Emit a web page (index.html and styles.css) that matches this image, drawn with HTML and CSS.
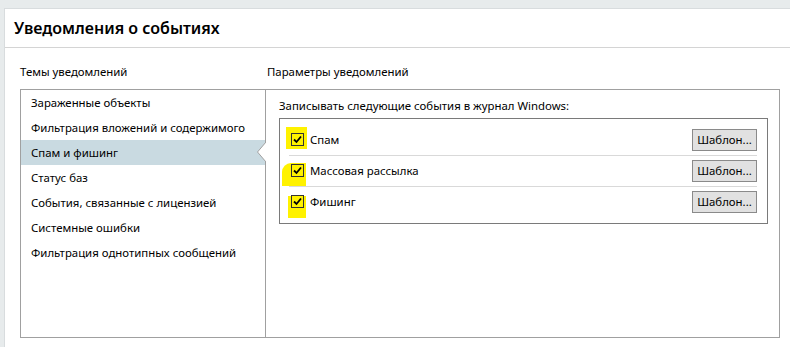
FILE: index.html
```html
<!DOCTYPE html>
<html lang="ru">
<head>
  <meta charset="UTF-8">
  <title>Уведомления о событиях</title>
  <link rel="stylesheet" href="styles.css">
</head>
<body>
  <div class="panel">
    <div class="panel-head">Уведомления о событиях</div>
    <div class="panel-body">
      <div class="captions">
        <div class="cap-left">Темы уведомлений</div>
        <div class="cap-right">Параметры уведомлений</div>
      </div>
      <div class="frame">
        <ul class="topics">
          <li>Зараженные объекты</li>
          <li>Фильтрация вложений и содержимого</li>
          <li class="selected">Спам и фишинг
            <svg class="notch" width="10" height="20" viewBox="0 0 10 20">
              <polygon points="10,0 1.5,10 10,20" fill="#fff"/>
              <polyline points="10,0 1.5,10 10,20" fill="none" stroke="#a0a0a0" stroke-width="1"/>
            </svg>
          </li>
          <li>Статус баз</li>
          <li>События, связанные с лицензией</li>
          <li>Системные ошибки</li>
          <li>Фильтрация однотипных сообщений</li>
        </ul>
        <div class="settings">
          <div class="settings-caption">Записывать следующие события в журнал Windows:</div>
          <div class="events">
            <div class="event">
              <span class="mark mark-1"></span>
              <span class="check">
                <svg width="13" height="13" viewBox="0 0 13 13"><rect x="0.5" y="0.5" width="12" height="12" fill="none" stroke="#333"/><polyline points="3,6.5 5.5,9 10,3.5" fill="none" stroke="#000" stroke-width="1.8"/></svg>
              </span>
              <span class="event-name">Спам</span>
              <button class="btn" type="button">Шаблон...</button>
            </div>
            <div class="event">
              <span class="mark mark-2"></span>
              <span class="check">
                <svg width="13" height="13" viewBox="0 0 13 13"><rect x="0.5" y="0.5" width="12" height="12" fill="none" stroke="#333"/><polyline points="3,6.5 5.5,9 10,3.5" fill="none" stroke="#000" stroke-width="1.8"/></svg>
              </span>
              <span class="event-name">Массовая рассылка</span>
              <button class="btn" type="button">Шаблон...</button>
            </div>
            <div class="event">
              <span class="mark mark-3"></span>
              <span class="check">
                <svg width="13" height="13" viewBox="0 0 13 13"><rect x="0.5" y="0.5" width="12" height="12" fill="none" stroke="#333"/><polyline points="3,6.5 5.5,9 10,3.5" fill="none" stroke="#000" stroke-width="1.8"/></svg>
              </span>
              <span class="event-name">Фишинг</span>
              <button class="btn" type="button">Шаблон...</button>
            </div>
          </div>
        </div>
      </div>
    </div>
  </div>
</body>
</html>
```

FILE: styles.css
```css
* { box-sizing: border-box; margin: 0; padding: 0; }

body {
  background: #e7ebec;
  font-family: "Noto Sans", "Open Sans", sans-serif;
  font-size: 11.4px;
  color: #000;
  width: 790px;
  height: 347px;
  overflow: hidden;
}

/* Main panel */
.panel {
  margin: 8px 0 0 4px;
  background: #fff;
  border-top: 1px solid #d8dcde;
  border-left: 1px solid #d8dcde;
  height: 339px;
}
.panel-head {
  height: 39px;
  line-height: 38px;
  padding-left: 9px;
  font-size: 16px;
  font-weight: 600;
  border-bottom: 1px solid #d4d4d4;
}
.panel-body {
  padding: 16px 0 0 15px;
}

/* Column captions */
.captions {
  display: flex;
  height: 16px;
  line-height: 16px;
  margin-bottom: 9px;
}
.cap-left { width: 247px; }

/* Frame with two columns */
.frame {
  display: flex;
  width: 760px;
  height: 249px;
  border: 1px solid #a0a0a0;
}
.topics {
  list-style: none;
  width: 245px;
  border-right: 1px solid #a0a0a0;
}
.topics li {
  position: relative;
  height: 25px;
  line-height: 25px;
  padding-left: 10px;
  white-space: nowrap;
}
.topics li.selected { background: #c9dae1; }
.notch {
  position: absolute;
  right: -1px;
  top: 2px;
}

/* Settings side */
.settings {
  flex: 1;
  padding: 8px 11px 0 13px;
}
.settings-caption {
  height: 16px;
  line-height: 16px;
  margin-bottom: 4px;
}
.events {
  border: 1px solid #7a7a7a;
  padding: 6px 10px 6px 9px;
}
.event {
  position: relative;
  display: flex;
  align-items: center;
  height: 31px;
  border-bottom: 1px solid #d9d9d9;
  padding-bottom: 1px;
}
.event:last-child { border-bottom: none; height: 30px; }

.mark {
  position: absolute;
  background: #fff200;
}
.mark-1 { left: -3px; top: 2px; width: 21px; height: 22px; }
.mark-2 { left: -7px; top: 7px; width: 24px; height: 23px; border-radius: 9px 0 0 0; }
.mark-3 { left: -1px; top: 9px; width: 18px; height: 22px; }

.check {
  position: relative;
  width: 13px;
  height: 13px;
  margin: 0 6px 0 2px;
  display: flex;
}
.event-name { position: relative; flex: 1; }

.btn {
  width: 65px;
  height: 22px;
  background: #e1e1e1;
  border: 1px solid #8a8a8a;
  font-family: inherit;
  font-size: 11.4px;
  color: #000;
}
```
